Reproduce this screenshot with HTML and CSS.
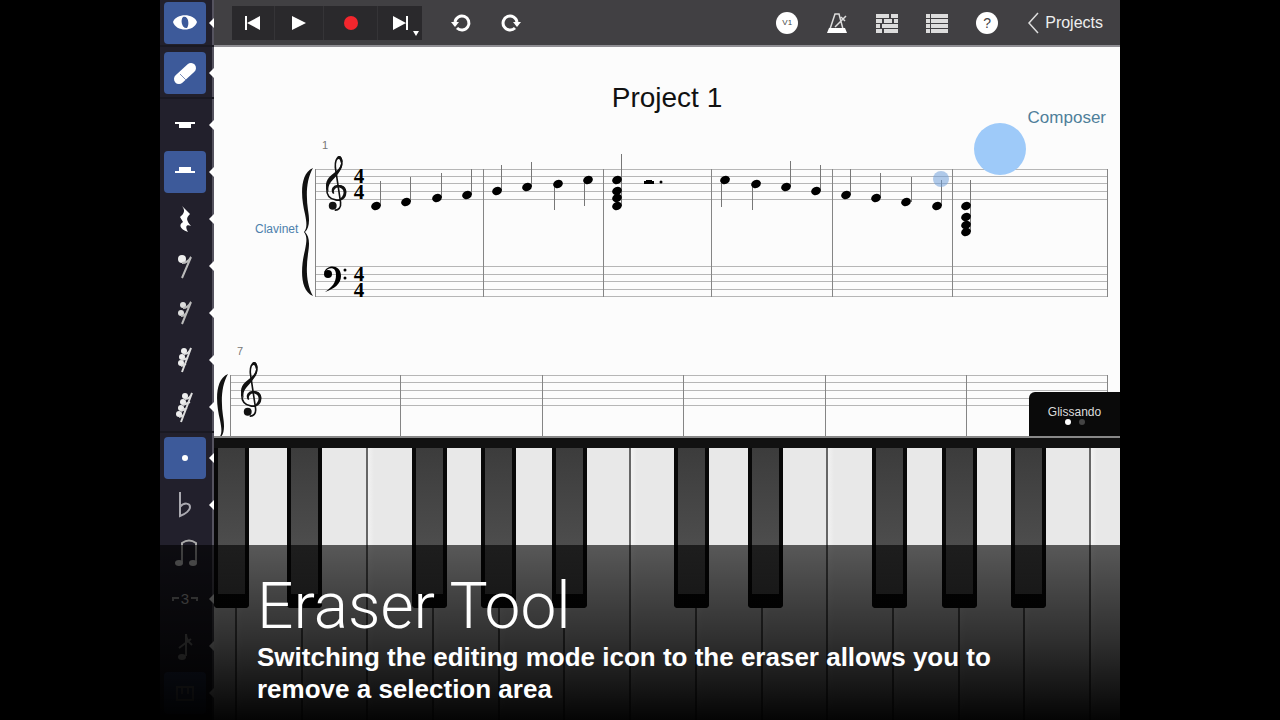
FILE: index.html
```html
<!DOCTYPE html>
<html lang="en">
<head>
<meta charset="utf-8">
<meta name="viewport" content="width=device-width, initial-scale=1">
<title>Project 1</title>
<link rel="stylesheet" href="styles.css">
</head>
<body>
<svg class="defs" aria-hidden="true">
  <defs>
    <symbol id="treble" viewBox="0 0 72 174" overflow="visible">
      <path d="M29 118C20 104 30 93 42 93C55 93 65 102 65 115C65 132 50 140 35 137C14 134 7 119 8 101C10 80 24 68 38 55C49 45 55 35 54 20C53 10 49 5 45 6C37 10 33 24 34 38L50 145C52 161 43 169 32 168" fill="none" stroke="#111" stroke-width="5"/>
      <path d="M55 25C55 44 42 58 30 72C16 86 10 98 14 113C0 98 4 78 19 64C36 50 50 42 52 22ZM48 92C66 92 74 112 62 127C57 134 50 137 43 138C66 122 62 103 46 99C35 98 29 104 29 115C20 104 31 92 48 92ZM40 5C46 0 54 4 56 20L50 24C49 12 45 9 38 15Z" fill="#111"/>
      <circle cx="26" cy="155" r="12" fill="#111"/>
    </symbol>
    <symbol id="brace" viewBox="0 0 12 128" overflow="visible">
      <path d="M11 0C-3 6-1 30 3 46C5 56 5 60 2 64C5 68 5 72 3 82C-1 98-3 122 11 128C4 116 4 100 6 86C8 74 7 68 3 64C7 60 8 54 6 42C4 28 4 12 11 0Z" fill="#111"/>
    </symbol>
    <ellipse id="head" rx="5" ry="4" transform="rotate(-22)" fill="#000"/>
  </defs>
</svg>

<div class="app">
  <nav class="rail" aria-label="Editing tools">
    <div class="group group-mode">
      <button class="tool on" aria-label="View mode"><svg viewBox="0 0 42 42"><path fill-rule="evenodd" fill="#fff" d="M9 20C12 11 30 11 33 20C30 30 12 30 9 20ZM19 15C16 18 18 27 23 26C26 22 24 13 19 15Z"/></svg></button>
    </div>
    <div class="group group-edit">
      <button class="tool on" aria-label="Eraser"><svg viewBox="0 0 42 42"><path d="M15 27L27 16" stroke="#fff" stroke-width="10" stroke-linecap="round"/><path d="M16 22L22 28" stroke="#7f92bf"/></svg></button>
    </div>
    <div class="group group-rests">
      <button class="tool" aria-label="Whole rest"><svg viewBox="0 0 42 42"><path fill="#fff" d="M11 18H31V20H27V24H15V20H11Z"/></svg></button>
      <button class="tool on" aria-label="Half rest"><svg viewBox="0 0 42 42"><path fill="#fff" d="M11 22H31V20H27V16H15V20H11Z"/></svg></button>
      <button class="tool" aria-label="Quarter rest"><svg viewBox="0 0 42 42"><path fill="#fff" d="M18 8L26 16C22 20 22 22 27 28C22 26 21 29 24 34C15 31 15 26 19 24L16 19C21 15 21 12 18 8Z"/></svg></button>
      <button class="tool" aria-label="Eighth rest"><svg viewBox="0 0 42 42"><circle cx="18" cy="14" r="4" fill="#eee"/><path d="M18 18Q24 18 27 12L18 33" fill="none" stroke="#bbb" stroke-width="2"/></svg></button>
      <button class="tool" aria-label="Sixteenth rest"><svg viewBox="0 0 42 42"><g fill="#ddd"><circle cx="19" cy="13" r="3"/><circle cx="17" cy="21" r="3"/></g><path d="M19 16Q24 16 27 10L18 32M17 24Q21 24 23 20" fill="none" stroke="#bbb" stroke-width="2"/></svg></button>
      <button class="tool" aria-label="Thirty-second rest"><svg viewBox="0 0 42 42"><g fill="#eee"><circle cx="20" cy="12" r="3"/><circle cx="18" cy="18" r="3"/><circle cx="17" cy="24" r="3"/></g><path d="M20 15Q25 15 27 9L18 33M18 21L24 19M17 27L22 25" fill="none" stroke="#ddd" stroke-width="2"/></svg></button>
      <button class="tool" aria-label="Sixty-fourth rest"><svg viewBox="0 0 42 42"><g fill="#eee"><circle cx="21" cy="10" r="3"/><circle cx="19" cy="16" r="3"/><circle cx="17" cy="22" r="3"/><circle cx="15" cy="28" r="3"/></g><path d="M21 13Q26 13 28 7L17 36M19 19L26 16M17 25L23 22M15 31L20 29" fill="none" stroke="#ddd" stroke-width="2"/></svg></button>
    </div>
    <div class="group group-marks">
      <button class="tool on" aria-label="Dotted"><svg viewBox="0 0 42 42"><circle cx="21" cy="21" r="3" fill="#fff"/></svg></button>
      <button class="tool" aria-label="Flat"><svg viewBox="0 0 42 42"><path d="M16 8V32C22 30 26 26 26 23C26 19 20 18 16 23" fill="none" stroke="#aaa9b0" stroke-width="2"/></svg></button>
      <button class="tool plain" aria-label="Beam"><svg viewBox="0 0 42 42"><path d="M18 31V12Q25 7 32 12V31" fill="none" stroke="#aaa" stroke-width="2"/><ellipse cx="15" cy="32" rx="4" ry="3" fill="#ccc"/><ellipse cx="29" cy="32" rx="4" ry="3" fill="#ccc"/></svg></button>
      <button class="tool" aria-label="Triplet"><svg viewBox="0 0 42 42"><path d="M9 23V20H15M27 20H33V23" fill="none" stroke="#aaa" stroke-width="2"/><text x="21" y="26" text-anchor="middle" class="triplet-text">3</text></svg></button>
      <button class="tool" aria-label="Grace note"><svg viewBox="0 0 42 42"><path d="M22 31V9Q22 15 28 20M15 23L27 14" fill="none" stroke="#999" stroke-width="2"/><ellipse cx="18" cy="32" rx="4" ry="3" fill="#aaa"/></svg></button>
      <button class="tool on dim" aria-label="Keyboard"><svg viewBox="0 0 42 42"><path d="M13 15H29V28H13ZM18 15V22M24 15V22" fill="none" stroke="#ccc" stroke-width="2"/></svg></button>
    </div>
  </nav>

  <header class="bar">
    <div class="transport">
      <button aria-label="Previous"><svg viewBox="0 0 24 24"><path fill="#fff" d="M4 5H6V19H4ZM19 5V19L6 12Z"/></svg></button>
      <button aria-label="Play"><svg viewBox="0 0 24 24"><path fill="#fff" d="M5 5V19L19 12Z"/></svg></button>
      <button aria-label="Record"><svg viewBox="0 0 24 24"><circle cx="12" cy="12" r="7" fill="#f3262d"/></svg></button>
      <button class="next" aria-label="Next"><svg viewBox="0 0 24 24"><path fill="#fff" d="M5 5V19L18 12ZM18 5H20V19H18Z"/></svg><i></i></button>
    </div>
    <div class="history">
      <button aria-label="Undo"><svg viewBox="0 0 24 24"><path d="M6 11A7 7 0 1 1 8 17" fill="none" stroke="#fff" stroke-width="3"/><path fill="#fff" d="M2 11H10L6 16Z"/></svg></button>
      <button aria-label="Redo"><svg viewBox="0 0 24 24"><path d="M18 11A7 7 0 1 0 16 17" fill="none" stroke="#fff" stroke-width="3"/><path fill="#fff" d="M14 11H22L18 16Z"/></svg></button>
    </div>
    <div class="actions">
      <button aria-label="Voice 1"><span class="disc voice">V1</span></button>
      <button aria-label="Metronome"><svg viewBox="0 0 24 24"><path d="M5 18L10 3H14L18 18M10 16L21 5M16 6L20 10" fill="none" stroke="#ddd" stroke-width="1.500"/><path fill="#fff" d="M4 17H20L22 22H2Z"/></svg></button>
      <button aria-label="Mixer"><svg viewBox="0 0 24 24"><path d="M1 5H23M1 10H23M1 15H23M1 20H23" stroke="#ddd" stroke-width="4"/><path d="M15 2V7M18 8V12M8 8V12M6 13V17M8 18V22" stroke="#414043" stroke-width="2"/></svg></button>
      <button aria-label="Tracks"><svg viewBox="0 0 24 24"><path d="M1 5H5M1 10H5M1 15H5M1 20H5M6 5H23M6 10H23M6 15H23M6 20H23" stroke="#ddd" stroke-width="4"/></svg></button>
      <button aria-label="Help"><span class="disc help">?</span></button>
      <a href="#projects"><svg viewBox="0 0 12 22"><path d="M11 1L2 11L11 21" fill="none" stroke="#ddd" stroke-width="1.500"/></svg>Projects</a>
    </div>
  </header>

  <main class="sheet">
    <div class="heading">
      <h1>Project 1</h1>
      <p>Composer</p>
    </div>
    <svg class="score" viewBox="214 127 906 310" role="img" aria-label="Score">
      <g class="label">
        <text x="322" y="149">1</text>
        <text x="237" y="355">7</text>
      </g>
      <text class="instrument" x="255" y="233">Clavinet</text>
      <path class="staff" d="M315 169.500H1107M315 176.500H1107M315 183.500H1107M315 191.500H1107M315 199.500H1107M315 266.500H1107M315 274.500H1107M315 281.500H1107M315 289.500H1107M315 296.500H1107"/>
      <path class="lines" d="M315.500 169V297M483.500 169V297M603.500 169V297M711.500 169V297M832.500 169V297M952.500 169V297M1107.500 169V297"/>
      <path class="staff" d="M230 375.500H1107M230 382.500H1107M230 390.500H1107M230 398.500H1107M230 405.500H1107"/>
      <path class="lines" d="M230.500 375V440M400.500 375V440M542.500 375V440M683.500 375V440M825.500 375V440M966.500 375V440M1107.500 375V440"/>
      <use href="#treble" x="324" y="155" width="24" height="57"/>
      <use href="#treble" x="239" y="361" width="24" height="57"/>
      <use href="#brace" x="302" y="168" width="12" height="128"/>
      <use href="#brace" x="217" y="374" width="12" height="128"/>
      <circle cx="328" cy="274" r="4"/>
      <path d="M324 273C326 264 341 264 341 276C341 284 334 289 325 292C332 287 336 283 336 275C336 266 328 267 324 273Z"/>
      <circle cx="345" cy="270" r="1.500"/><circle cx="345" cy="278" r="1.500"/>
      <g class="time">
        <text x="359" y="183">4</text><text x="359" y="199">4</text>
        <text x="359" y="281">4</text><text x="359" y="297">4</text>
      </g>
      <path class="stems" d="M380.500 206V181M410.500 202V177M441.500 198V173M471.500 195V169M501.500 191V165M531.500 187V162M554.500 184V210M584.500 180V206M621.500 206V154M721.500 180V207M752.500 184V210M790.500 187V161M820.500 191V165M850.500 195V169M880.500 198V173M911.500 202V177M941.500 206V180M970.500 232V180"/>
      <use href="#head" x="376" y="206"/><use href="#head" x="406" y="202"/><use href="#head" x="437" y="198"/><use href="#head" x="467" y="195"/>
      <use href="#head" x="497" y="191"/><use href="#head" x="527" y="187"/><use href="#head" x="558" y="184"/><use href="#head" x="588" y="180"/>
      <use href="#head" x="617" y="180"/><use href="#head" x="617" y="191"/><use href="#head" x="617" y="198"/><use href="#head" x="617" y="206"/>
      <path d="M644 181H646V180H652V181H654V184H644Z"/><circle cx="661" cy="182" r="1.500"/>
      <use href="#head" x="725" y="180"/><use href="#head" x="756" y="184"/><use href="#head" x="786" y="187"/><use href="#head" x="816" y="191"/>
      <use href="#head" x="846" y="195"/><use href="#head" x="876" y="198"/><use href="#head" x="906" y="202"/><use href="#head" x="937" y="206"/>
      <use href="#head" x="966" y="206"/><use href="#head" x="966" y="217"/><use href="#head" x="966" y="225"/><use href="#head" x="966" y="232"/>
      <circle cx="941" cy="179" r="8" fill="#6f9fd8" opacity=".55"/>
      <circle cx="1000" cy="149" r="26" fill="#9ecaf9"/>
    </svg>
    <button class="gliss">Glissando<span><i></i><i></i></span></button>
  </main>

  <section class="piano" aria-label="Keyboard">
    <div class="white">
      <button aria-label="C"></button><button aria-label="D"></button><button aria-label="E"></button><button aria-label="F"></button><button aria-label="G"></button>
      <button aria-label="A"></button><button aria-label="B"></button><button aria-label="C"></button><button aria-label="D"></button><button aria-label="E"></button>
      <button aria-label="F"></button><button aria-label="G"></button><button aria-label="A"></button><button aria-label="B"></button><button aria-label="C"></button>
    </div>
    <div class="black">
      <button aria-label="C sharp"></button><button aria-label="D sharp"></button><button aria-label="F sharp"></button><button aria-label="G sharp"></button><button aria-label="A sharp"></button>
      <button aria-label="C sharp"></button><button aria-label="D sharp"></button><button aria-label="F sharp"></button><button aria-label="G sharp"></button><button aria-label="A sharp"></button>
    </div>
  </section>

  <aside class="caption">
    <h2>Eraser Tool</h2>
    <p>Switching the editing mode icon to the eraser allows you to remove a selection area</p>
  </aside>
</div>
</body>
</html>
```
FILE: styles.css
```css
* { box-sizing: border-box; }
body { margin: 0; background: #000; font-family: "Liberation Sans", Arial, sans-serif; }
button { padding: 0; border: 0; background: none; color: inherit; font: inherit; }
h1, h2, p { margin: 0; font-weight: 400; }
.defs { position: absolute; width: 0; height: 0; }

.app {
  position: relative;
  display: grid;
  grid-template: 47px minmax(0, 1fr) 282px / 54px minmax(0, 1fr);
  width: 75%;
  height: 100vh;
  min-height: 600px;
  margin: 0 auto;
  overflow: hidden;
}

/* Tool rail */
.rail { grid-row: 1 / 4; background: #22202c; box-shadow: inset -2px 0 #55535f; overflow: hidden; }
.group { border-bottom: 2px solid #1a1922; }
.group-mode { height: 47px; }
.group-edit { padding: 3px 0; height: 52px; }
.group-rests { padding: 2px 0 1px; }
.group-marks { padding-top: 1px; border: 0; }
.tool { position: relative; display: flex; align-items: center; width: 54px; height: 47px; padding-left: 4px; }
.group-mode .tool, .group-edit .tool { height: 45px; }
.tool > svg { width: 42px; height: 42px; border-radius: 4px; }
.tool.on > svg { background: #3d5a9a; }
.tool.dim > svg { opacity: .6; }
.tool::after {
  content: "";
  position: absolute;
  right: 0;
  border: 5px solid transparent;
  border-right-color: #fff;
  border-left: 0;
}
.tool.plain::after { display: none; }
.triplet-text { font-size: 15px; fill: #ccc; }

/* Toolbar */
.bar {
  display: flex;
  align-items: center;
  padding: 0 17px 0 18px;
  color: #eee;
  background: #414043;
  border-bottom: 2px solid #8f8e93;
}
.bar svg { display: block; width: 24px; height: 24px; }
.bar button { display: flex; align-items: center; justify-content: center; height: 34px; }
.transport { display: grid; grid-template-columns: 42px 48px 53px 44px; gap: 1px; background: #353437; }
.transport button { position: relative; background: #2a292c; }
.next i { position: absolute; right: 3px; bottom: 4px; border: 3px solid transparent; border-top: 5px solid #fff; border-bottom: 0; }
.history { display: flex; margin-left: 14px; }
.history button, .actions button { width: 50px; }
.actions { display: flex; align-items: center; margin-left: auto; }
.disc { width: 22px; border-radius: 50%; background: #fff; color: #444; line-height: 22px; text-align: center; }
.voice { font-size: 8px; }
.help { font-size: 14px; }
.bar a { display: flex; align-items: center; gap: 6px; margin-left: 15px; color: inherit; font-size: 16px; text-decoration: none; }
.bar a svg { width: 12px; height: 22px; }

/* Score */
.sheet { position: relative; overflow: hidden; background: #fcfcfc; border-bottom: 2px solid #888; }
.heading { padding: 35px 14px 0; height: 80px; }
.heading h1 { font-size: 28px; line-height: 32px; text-align: center; color: #111; }
.heading p { margin-top: -6px; font-size: 17px; line-height: 20px; text-align: right; color: #4f7f9a; }
.score { position: relative; display: block; width: 100%; height: auto; overflow: visible; }
.label { font-size: 11px; fill: #777; }
.instrument { font-size: 12px; fill: #4c80ac; }
.staff { stroke: #b6b6b6; }
.lines { stroke: #858585; }
.stems { stroke: #777; }
.time { font: bold 21px "Liberation Serif", serif; text-anchor: middle; }
.gliss {
  position: absolute;
  right: 0;
  bottom: -2px;
  width: 91px;
  height: 46px;
  border-radius: 6px 0 0 0;
  background: #0a0a0a;
  color: #ddd;
  font-size: 12px;
  line-height: 14px;
}
.gliss span { display: flex; justify-content: center; gap: 8px; }
.gliss i { width: 6px; height: 6px; border-radius: 50%; background: #fff; }
.gliss i + i { background: #444; }

/* Piano */
.piano { position: relative; border-top: 10px solid #111; background: #111; }
.white { display: grid; grid-template-columns: 23fr repeat(13, 66fr) 29fr; height: 100%; }
.white button { border-right: 2px solid #666; background: linear-gradient(90deg, #f2f2f2, #e8e8e8 6px); }
.white button:last-child { border: 0; }
.black button {
  position: absolute;
  top: 0;
  width: 35px;
  height: 160px;
  border: solid #080808;
  border-width: 0 4px 14px;
  border-radius: 0 0 4px 4px;
  background: linear-gradient(#3c3c3c, #555);
}
.black :nth-child(1) { left: 0; }
.black :nth-child(2) { left: 8.1%; }
.black :nth-child(3) { left: 21.9%; }
.black :nth-child(4) { left: 29.5%; }
.black :nth-child(5) { left: 37.3%; }
.black :nth-child(6) { left: 50.8%; }
.black :nth-child(7) { left: 58.9%; }
.black :nth-child(8) { left: 72.6%; }
.black :nth-child(9) { left: 80.3%; }
.black :nth-child(10) { left: 88%; }

/* Caption */
.caption {
  position: absolute;
  right: 0;
  bottom: 0;
  left: 0;
  padding: 28px 97px 15px;
  color: #fff;
  background: linear-gradient(rgba(0, 0, 0, .62), rgba(0, 0, 0, .8) 55%, rgba(0, 0, 0, .98));
}
.caption h2 { font: 300 64px/68px Roboto, sans-serif; }
.caption p { font-size: 26px; font-weight: 700; line-height: 32px; }
```
